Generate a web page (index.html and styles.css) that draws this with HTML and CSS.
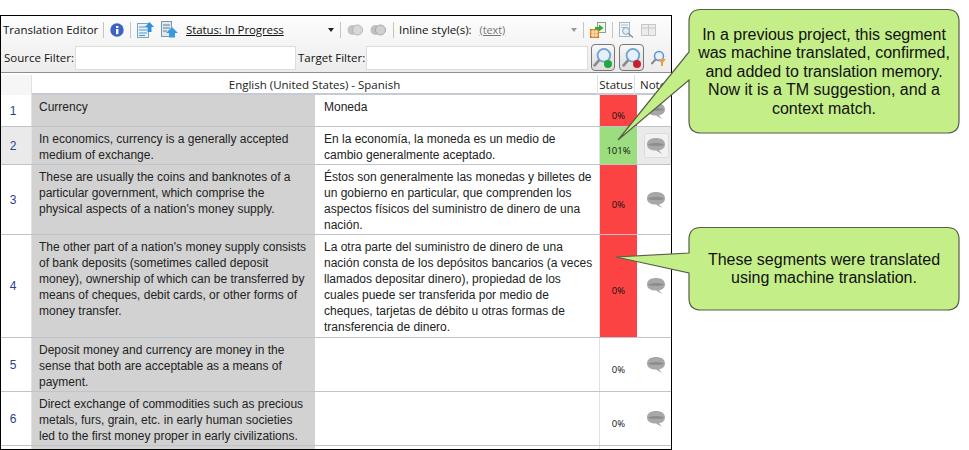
FILE: index.html
```html
<!DOCTYPE html>
<html lang="en">
<head>
    <meta charset="UTF-8">
    <title>Translation Editor</title>
    <link rel="stylesheet" href="styles.css">
</head>
<body>
    <svg class="defs" width="0" height="0">
        <symbol id="bubble" viewBox="0 0 18 16">
            <path d="M9 0C14 0 18 2 18 6.5C18 10 15 12 12 12.3L15 16L9 12.5C4 12.5 0 10.5 0 6.5C0 2 4 0 9 0Z" fill="#a8a8a8"/>
            <path d="M1 6.5C3 4.5 15 4.5 17 6.5C16 8.5 2 8.5 1 6.5Z" fill="#8e8e8e"/>
        </symbol>
        <symbol id="lens" viewBox="0 0 22 24">
            <circle cx="12" cy="9" r="7" fill="#e4f0fb" stroke="#6fa3d8" stroke-width="2"/>
            <path d="M7 14L1 21" stroke="#8a8a8a" stroke-width="3"/>
        </symbol>
    </svg>

    <div class="editor">
        <div class="toolbar">
            <div class="tool-row">
                <span class="title">Translation Editor</span>
                <span class="sep"></span>
                <svg class="icon" width="14" height="14" viewBox="0 0 14 14">
                    <circle cx="7" cy="7" r="6.7" fill="#3a62c8"/>
                    <rect x="6" y="6" width="2.4" height="5.2" fill="#fff"/>
                    <rect x="6" y="3" width="2.4" height="2" fill="#fff"/>
                </svg>
                <span class="sep"></span>
                <svg class="icon" width="17" height="17" viewBox="0 0 17 17">
                    <rect x="0.5" y="2.5" width="11" height="14" fill="#eaf3fa" stroke="#7fa4b8"/>
                    <path d="M2 6H10M2 9H10M2 12H10M2 14.5H8" stroke="#4f96c8"/>
                    <path d="M12.5 1L17 6H14.5V11H10.5V6H8Z" fill="#2f8fd8"/>
                </svg>
                <svg class="icon icon-next" width="17" height="17" viewBox="0 0 17 17">
                    <rect x="0.5" y="0.5" width="10" height="15" fill="#dfe9ef" stroke="#7f98a8"/>
                    <path d="M2 4H9M2 7H9M2 10H6" stroke="#5a7f96"/>
                    <path d="M11 6L17 12H14V16.5H8V12H5Z" fill="#3a9ae0"/>
                </svg>
                <span class="status-drop"><span class="link">Status: In Progress</span><span class="caret"></span></span>
                <span class="sep"></span>
                <svg class="icon" width="16" height="12" viewBox="0 0 16 12">
                    <circle cx="5.5" cy="6" r="5" fill="#c4c4c4"/>
                    <circle cx="10.5" cy="6" r="5" fill="#d8d8d8" stroke="#b4b4b4"/>
                </svg>
                <svg class="icon icon-next" width="16" height="12" viewBox="0 0 16 12">
                    <circle cx="5.5" cy="6" r="5" fill="#c0c0c0"/>
                    <circle cx="10.5" cy="6" r="5" fill="#cfcfcf" stroke="#a8a8a8"/>
                </svg>
                <span class="sep sep-wide"></span>
                <span class="style-drop"><span class="label">Inline style(s):</span><span class="link link-muted">(text)</span><span class="caret caret-muted"></span></span>
                <span class="sep"></span>
                <svg class="icon" width="16" height="16" viewBox="0 0 16 16">
                    <rect x="7.5" y="0.5" width="8" height="10" fill="#f2f6ee" stroke="#8aa08a"/>
                    <rect x="0.5" y="7.5" width="8" height="8" fill="#f4a23c" stroke="#d8701c"/>
                    <path d="M0.5 10H8.5M0.5 13H8.5M3 7.5V15.5M6 7.5V15.5" stroke="#fff" stroke-width="0.7"/>
                    <path d="M5 5H9V2.5L13.5 6L9 9.5V7.5H5Z" fill="#35a83a"/>
                </svg>
                <span class="sep"></span>
                <svg class="icon" width="15" height="16" viewBox="0 0 15 16">
                    <rect x="0.5" y="0.5" width="10" height="14" fill="#f2f6f8" stroke="#a8b8c0"/>
                    <path d="M2 3H9M2 5.5H9" stroke="#a8c0d0"/>
                    <circle cx="7" cy="9" r="3.4" fill="#e0ecf6" stroke="#8aa8c0"/>
                    <path d="M9.5 11.5L14 15.5" stroke="#888" stroke-width="1.2"/>
                </svg>
                <svg class="icon icon-table" width="15" height="12" viewBox="0 0 15 12">
                    <rect x="0.5" y="0.5" width="14" height="11" fill="#ececec" stroke="#c8c8c8"/>
                    <path d="M0.5 4H14.5M7.5 0.5V11.5" stroke="#c8c8c8"/>
                </svg>
            </div>
            <div class="tool-row filter-row">
                <label class="filter-label">Source Filter:</label>
                <span class="filter-box"></span>
                <label class="filter-label target-label">Target Filter:</label>
                <span class="filter-box target-box"></span>
                <span class="search-btn">
                    <svg width="20" height="22"><use href="#lens"/></svg>
                    <span class="dot dot-green"></span>
                </span>
                <span class="search-btn search-btn-red">
                    <svg width="20" height="22"><use href="#lens"/></svg>
                    <span class="dot dot-red"></span>
                </span>
                <svg class="filter-icon" width="15" height="16" viewBox="0 0 15 16">
                    <circle cx="8" cy="6" r="4.5" fill="#e4f0fb" stroke="#5f93cc" stroke-width="1.5"/>
                    <path d="M4.5 9.5L0.5 14" stroke="#888" stroke-width="2"/>
                    <path d="M7 9H15L12 12.5V16H10V12.5Z" fill="#e8a040"/>
                </svg>
            </div>
        </div>

        <div class="grid">
            <div class="row head">
                <div class="cell num"></div>
                <div class="cell head-title">English (United States) - Spanish</div>
                <div class="cell head-status">Status</div>
                <div class="cell head-notes">Notes</div>
            </div>
            <div class="row row-1">
                <div class="cell num">1</div>
                <div class="cell source">Currency</div>
                <div class="cell target">Moneda</div>
                <div class="cell status red">0%</div>
                <div class="cell notes"><svg width="18" height="16"><use href="#bubble"/></svg></div>
            </div>
            <div class="row row-2 current">
                <div class="cell num">2</div>
                <div class="cell source">In economics, currency is a generally accepted medium of exchange.</div>
                <div class="cell target">En la economía, la moneda es un medio de cambio generalmente aceptado.</div>
                <div class="cell status green">101%</div>
                <div class="cell notes"><span class="note-btn"><svg width="18" height="16"><use href="#bubble"/></svg></span></div>
            </div>
            <div class="row row-3">
                <div class="cell num">3</div>
                <div class="cell source">These are usually the coins and banknotes of a particular government, which comprise the physical aspects of a nation's money supply.</div>
                <div class="cell target">Éstos son generalmente las monedas y billetes de un gobierno en particular, que comprenden los aspectos físicos del suministro de dinero de una nación.</div>
                <div class="cell status red">0%</div>
                <div class="cell notes"><svg width="18" height="16"><use href="#bubble"/></svg></div>
            </div>
            <div class="row row-4">
                <div class="cell num">4</div>
                <div class="cell source">The other part of a nation's money supply consists of bank deposits (sometimes called deposit money), ownership of which can be transferred by means of cheques, debit cards, or other forms of money transfer.</div>
                <div class="cell target">La otra parte del suministro de dinero de una nación consta de los depósitos bancarios (a veces llamados depositar dinero), propiedad de los cuales puede ser transferida por medio de cheques, tarjetas de débito u otras formas de transferencia de dinero.</div>
                <div class="cell status red">0%</div>
                <div class="cell notes"><svg width="18" height="16"><use href="#bubble"/></svg></div>
            </div>
            <div class="row row-5">
                <div class="cell num">5</div>
                <div class="cell source">Deposit money and currency are money in the sense that both are acceptable as a means of payment.</div>
                <div class="cell target"></div>
                <div class="cell status">0%</div>
                <div class="cell notes"><svg width="18" height="16"><use href="#bubble"/></svg></div>
            </div>
            <div class="row row-6">
                <div class="cell num">6</div>
                <div class="cell source">Direct exchange of commodities such as precious metals, furs, grain, etc. in early human societies led to the first money proper in early civilizations.</div>
                <div class="cell target"></div>
                <div class="cell status">0%</div>
                <div class="cell notes"><svg width="18" height="16"><use href="#bubble"/></svg></div>
            </div>
            <div class="row row-7">
                <div class="cell num"></div>
                <div class="cell source"></div>
                <div class="cell target"></div>
            </div>
        </div>
    </div>

    <!-- callouts sit over the editor, the tails point at cells -->
    <svg class="callout-art" width="969" height="450" viewBox="0 0 969 450">
        <path class="callout-shape" d="M701 9.5H947Q959 9.5 959 21.5V121Q959 133 947 133H701Q689 133 689 121V80L618 140L689 52V21.5Q689 9.5 701 9.5Z"/>
        <path class="callout-shape" d="M701 227.5H947Q959 227.5 959 239.5V298Q959 310 947 310H701Q689 310 689 298V273L616 257L689 253V239.5Q689 227.5 701 227.5Z"/>
    </svg>
    <div class="callout-text callout-one">In a previous project, this segment was machine translated, confirmed, and added to translation memory. Now it is a TM suggestion, and a context match.</div>
    <div class="callout-text callout-two">These segments were translated using machine translation.</div>
</body>
</html>
```

FILE: styles.css
```css
body {
    margin: 0;
    background: #fff;
    font-family: "Liberation Sans", Arial, sans-serif;
    width: 969px;
    height: 450px;
    position: relative;
    overflow: hidden;
}
.defs {
    position: absolute;
}
.editor {
    margin-top: 15px;
    width: 670px;
    height: 433px;
    border: 1px solid #000;
    overflow: hidden;
}

/* toolbar */
.toolbar {
    height: 56px;
    background: linear-gradient(#fdfdfd, #ececec);
    border-bottom: 1px solid #8f8f8f;
    font-family: "Open Sans", sans-serif;
    font-size: 11.5px;
    color: #111;
}
.tool-row {
    display: flex;
    align-items: center;
    height: 27px;
    padding-left: 2px;
}
.title {
    width: 94px;
    flex: none;
    white-space: nowrap;
}
.sep {
    width: 1px;
    height: 16px;
    background: #c4c4c4;
    margin: 0 6px;
    flex: none;
}
.sep-wide {
    margin: 0 5px 0 7px;
}
.icon {
    flex: none;
}
.icon-next {
    margin-left: 7px;
}
.icon-table {
    margin-left: 7px;
}
.status-drop {
    display: flex;
    align-items: center;
    width: 148px;
    margin-left: 8px;
    flex: none;
}
.link {
    text-decoration: underline;
    letter-spacing: -0.1px;
}
.link-muted {
    color: #777;
    font-size: 11px;
    margin-left: 8px;
}
.caret {
    margin-left: auto;
    border-top: 4px solid #222;
    border-left: 3px solid transparent;
    border-right: 3px solid transparent;
}
.caret-muted {
    border-top-color: #999;
}
.style-drop {
    display: flex;
    align-items: center;
    width: 178px;
    flex: none;
    white-space: nowrap;
}
.filter-row {
    height: 29px;
}
.filter-label {
    width: 71px;
    padding-left: 1px;
    white-space: nowrap;
    flex: none;
}
.filter-box {
    width: 219px;
    height: 22px;
    background: #fff;
    border: 1px solid #dcdcdc;
    flex: none;
}
.target-label {
    width: 68px;
    padding-left: 2px;
}
.target-box {
    width: 220px;
}
.search-btn {
    position: relative;
    width: 22px;
    height: 25px;
    margin-left: 3px;
    border: 1px solid #777;
    border-radius: 4px;
    background: linear-gradient(#f8f8f8, #dcdcdc);
    display: flex;
    align-items: center;
    justify-content: center;
    flex: none;
}
.search-btn-red {
    width: 23px;
    margin-left: 4px;
}
.dot {
    position: absolute;
    right: 2px;
    bottom: 2px;
    width: 8px;
    height: 8px;
    border-radius: 50%;
}
.dot-green {
    background: #22a83a;
}
.dot-red {
    background: #c8202c;
}
.filter-icon {
    margin-left: 7px;
    flex: none;
}

/* grid */
.grid {
    font-size: 12px;
    line-height: 16px;
    color: #222;
}
.row {
    display: grid;
    grid-template-columns: 31px 283px 2px 283px 37px 34px;
    border-bottom: 1px solid #bfc3cb;
}
.cell {
    min-width: 0;
}
.head {
    grid-template-columns: 31px 566px 37px 34px;
    height: 18px;
    margin-top: 2px;
    border-bottom: 2px solid #c6cad2;
    font-family: "Open Sans", sans-serif;
    font-size: 11.5px;
    line-height: 20px;
    background: #fff;
}
.head .num {
    background: #f6f6f6;
}
.head-title {
    text-align: center;
    border-right: 1px solid #dfe2e8;
}
.head-status {
    text-align: center;
    border-right: 1px solid #dfe2e8;
}
.head-notes {
    padding-left: 5px;
    white-space: nowrap;
}
.row-1 { height: 31px; }
.row-2 { height: 37px; }
.row-3 { height: 69px; }
.row-4 { height: 102px; }
.row-5 { height: 53px; }
.row-6 { height: 53px; }
.row-7 { height: 10px; }
.num {
    display: flex;
    align-items: center;
    justify-content: center;
    padding-right: 6px;
    color: #2a3f8f;
    border-right: 1px solid #dfe2e8;
}
.source {
    background: #d2d2d2;
    padding: 4px 7px 0 7px;
}
.target {
    grid-column: 4;
    padding: 4px 6px 0 7px;
    border-right: 1px solid #dfe2e8;
}
.status {
    display: flex;
    align-items: center;
    justify-content: center;
    padding-top: 10px;
    font-family: "Open Sans", sans-serif;
    font-size: 9.5px;
    color: #111;
}
.red {
    background: #fb4343;
}
.green {
    background: #9cdd80;
}
.notes {
    display: flex;
    align-items: center;
    justify-content: center;
    padding-left: 4px;
}
.current .num,
.current .notes {
    background: #eaeaea;
}
.note-btn {
    display: flex;
    align-items: center;
    justify-content: center;
    width: 23px;
    height: 23px;
    background: #f2f2f2;
    border: 1px solid #dcdcdc;
    border-radius: 2px;
}

/* callouts */
.callout-art {
    position: absolute;
    left: 0;
    top: 0;
}
.callout-shape {
    fill: #c4ee88;
    stroke: #555e48;
    stroke-width: 1.2;
}
.callout-text {
    position: absolute;
    left: 696px;
    width: 256px;
    text-align: center;
    font-size: 16px;
    line-height: 18.4px;
    color: #111;
}
.callout-one {
    top: 26px;
}
.callout-two {
    top: 251px;
    left: 704px;
    width: 240px;
}
```
